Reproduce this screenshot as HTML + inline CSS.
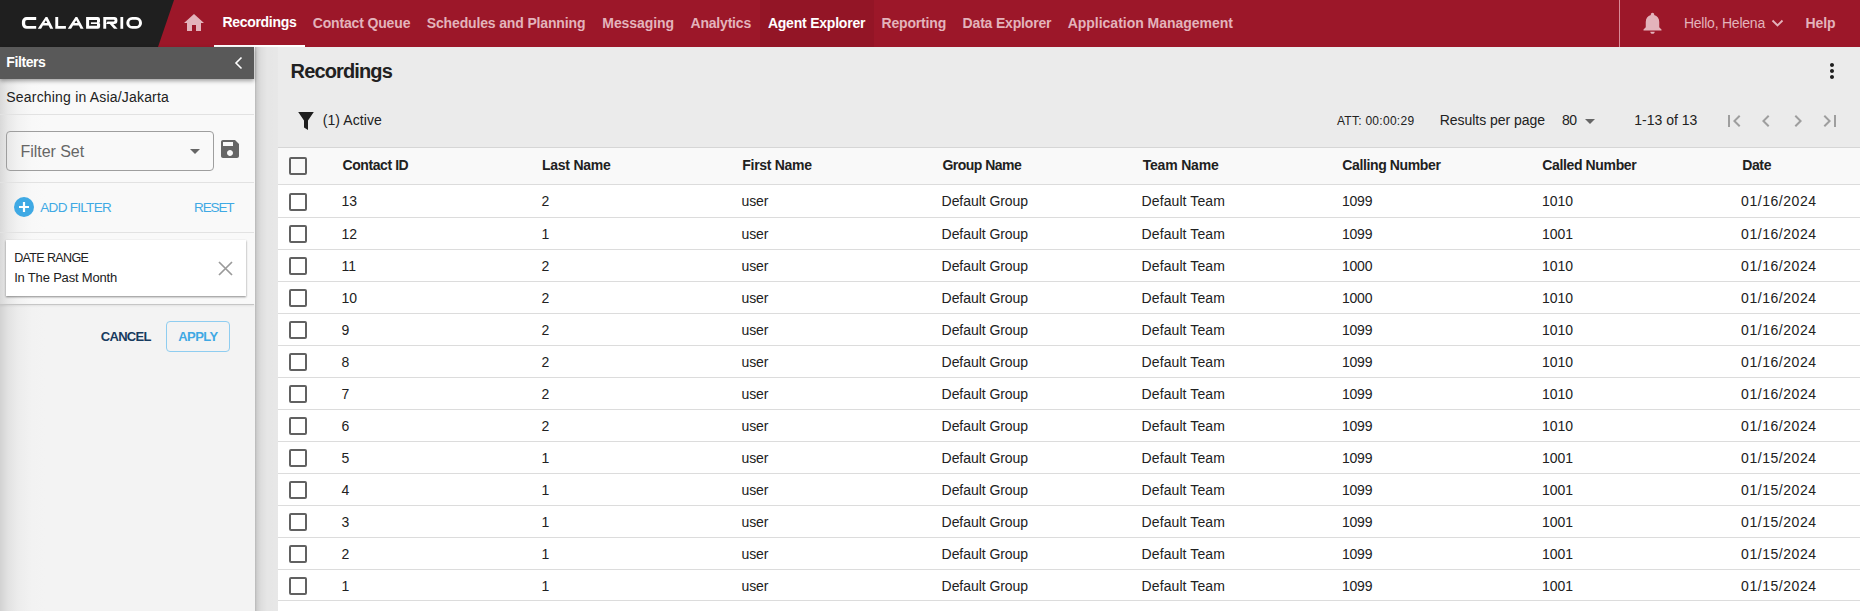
<!DOCTYPE html>
<html><head><meta charset="utf-8"><title>Recordings</title>
<style>
html,body{margin:0;padding:0}
body{width:1860px;height:611px;overflow:hidden;position:relative;background:#ebebeb;font-family:"Liberation Sans", sans-serif;}
.t{position:absolute;white-space:nowrap;line-height:1;}
svg{display:block}
</style></head><body>
<div style="position:absolute;left:0;top:0;width:1860px;height:47px;background:#9c1729"></div>
<svg style="position:absolute;left:0;top:0" width="180" height="47"><polygon points="0,0 174,0 158,47 0,47" fill="#1f1f1f"/></svg>
<svg style="position:absolute;left:0;top:0" width="160" height="47" viewBox="0 0 160 47">
<g fill="#fff">
<path d="M36.2,17 H26.6 A4.7,4.7 0 0 0 21.9,21.7 V24.1 A4.7,4.7 0 0 0 26.6,28.8 H36.2 V25.9 H27 A1.8,1.8 0 0 1 25.2,24.1 V21.7 A1.8,1.8 0 0 1 27,19.9 H36.2 Z"/>
<path d="M45.6,17 H47.4 L53.3,28.8 H50.2 L48.6,25.6 H42.2 L43.6,23 H47.3 L45.9,20.2 L41.1,28.8 H37.8 Z"/>
<path d="M55.3,17 H58.2 V26 H65.9 V28.8 H55.3 Z"/>
<path d="M75.5,17 H77.3 L83.6,28.8 H80.5 L78.9,25.6 H72.2 L73.6,23 H77.6 L76.2,20.2 L71.1,28.8 H67.8 Z"/>
<path fill-rule="evenodd" d="M86.1,17 H97.8 A2.2,2.2 0 0 1 100,19.2 V21.8 L99.4,22.9 L100.1,24 V26.6 A2.2,2.2 0 0 1 97.9,28.8 H86.1 Z M89.1,20.1 V25.7 H97 V20.1 Z"/><rect x="90.9" y="22.3" width="6.3" height="1.7"/>
<path d="M103.3,17 H114.3 A3.2,3.1 0 0 1 117.4,20.1 V20.9 A3.2,3.1 0 0 1 114.3,24 H113.3 L117.6,28.8 H114 L109.8,24 H106.2 L107.4,21.4 H113.9 A0.9,0.9 0 0 0 114.6,20.5 A0.9,0.9 0 0 0 113.9,19.7 H106.2 V28.8 H103.3 Z"/>
<rect x="120.4" y="17" width="2.8" height="11.8"/>
<path d="M132.2,17 H136.1 A5.9,5.9 0 0 1 142,22.9 A5.9,5.9 0 0 1 136.1,28.8 H132.2 A5.9,5.9 0 0 1 126.3,22.9 A5.9,5.9 0 0 1 132.2,17 Z M132.4,19.8 A3.1,3.1 0 0 0 129.3,22.9 A3.1,3.1 0 0 0 132.4,26 H135.9 A3.1,3.1 0 0 0 139,22.9 A3.1,3.1 0 0 0 135.9,19.8 Z"/>
</g></svg>
<svg style="position:absolute;left:182px;top:11px" width="24" height="24" viewBox="0 0 24 24"><path fill="#e3b3bb" d="M10 20v-6h4v6h5v-8h3L12 3 2 12h3v8z"/></svg>
<div style="position:absolute;left:214px;top:45px;width:91px;height:2px;background:#fff"></div>
<div style="position:absolute;left:760px;top:0;width:114px;height:47px;background:rgba(0,0,0,0.055)"></div>
<div class="t" style="left:222.40px;top:15px;font-size:14px;color:#fff;font-weight:700;letter-spacing:-0.301px;">Recordings</div>
<div class="t" style="left:312.70px;top:16px;font-size:14px;color:#e3b3bb;font-weight:700;letter-spacing:-0.151px;">Contact Queue</div>
<div class="t" style="left:426.80px;top:16px;font-size:14px;color:#e3b3bb;font-weight:700;letter-spacing:-0.150px;">Schedules and Planning</div>
<div class="t" style="left:602.30px;top:16px;font-size:14px;color:#e3b3bb;font-weight:700;letter-spacing:-0.072px;">Messaging</div>
<div class="t" style="left:690.50px;top:16px;font-size:14px;color:#e3b3bb;font-weight:700;letter-spacing:-0.194px;">Analytics</div>
<div class="t" style="left:767.90px;top:16px;font-size:14px;color:#fff;font-weight:700;letter-spacing:-0.218px;">Agent Explorer</div>
<div class="t" style="left:881.60px;top:16px;font-size:14px;color:#e3b3bb;font-weight:700;letter-spacing:-0.189px;">Reporting</div>
<div class="t" style="left:962.60px;top:16px;font-size:14px;color:#e3b3bb;font-weight:700;letter-spacing:-0.180px;">Data Explorer</div>
<div class="t" style="left:1067.70px;top:16px;font-size:14px;color:#e3b3bb;font-weight:700;letter-spacing:-0.017px;">Application Management</div>
<div style="position:absolute;left:1619px;top:0;width:1px;height:47px;background:#d98b97"></div>
<svg style="position:absolute;left:1638.5px;top:10.2px" width="27" height="26" viewBox="0 0 24 24" preserveAspectRatio="none"><path fill="#e3b3bb" d="M12 22c1.1 0 2-.9 2-2h-4c0 1.1.89 2 2 2zm6-6v-5c0-3.07-1.64-5.64-4.5-6.32V4c0-.83-.67-1.5-1.5-1.5s-1.5.67-1.5 1.5v.68C7.630 5.36 6 7.92 6 11v5l-2 2v1h16v-1l-2-2z"/></svg>
<div class="t" style="left:1683.90px;top:16px;font-size:14px;color:#e3b3bb;letter-spacing:-0.227px;">Hello, Helena</div>
<svg style="position:absolute;left:1771px;top:19px" width="13" height="9" viewBox="0 0 13 9"><path d="M1.5 1.5 L6.5 6.5 L11.5 1.5" stroke="#e3b3bb" stroke-width="1.9" fill="none"/></svg>
<div class="t" style="left:1805.50px;top:16px;font-size:14px;color:#e3b3bb;font-weight:700;letter-spacing:-0.134px;">Help</div>
<div style="position:absolute;left:0;top:47px;width:255px;height:564px;background:linear-gradient(to right,#d2d2d2 0px,#e2e2e2 8px,#ececec 18px,#f2f2f2 32px,#f3f3f3 45px)"></div>
<div style="position:absolute;left:0;top:79px;width:255px;height:225px;background:linear-gradient(to right,#d9d9d9 0px,#e8e8e8 8px,#f2f2f2 18px,#f8f8f8 32px,#f9f9f9 45px)"></div>
<div style="position:absolute;left:0;top:47px;width:254px;height:32px;background:#595959;box-shadow:0 2px 4px rgba(0,0,0,0.35)"></div>
<div class="t" style="left:6.30px;top:55px;font-size:14px;color:#fff;font-weight:700;letter-spacing:-0.416px;">Filters</div>
<svg style="position:absolute;left:226px;top:51px" width="24" height="24" viewBox="0 0 24 24"><path fill="none" stroke="#fff" stroke-width="1.6" d="M15.5 6.5 L10 12 L15.5 17.5"/></svg>
<div class="t" style="left:6.30px;top:90px;font-size:14px;color:#212121;letter-spacing:0.190px;">Searching in Asia/Jakarta</div>
<div style="position:absolute;left:0;top:114px;width:254px;height:1px;background:#e2e2e2"></div>
<div style="position:absolute;left:0;top:182px;width:254px;height:1px;background:#e2e2e2"></div>
<div style="position:absolute;left:0;top:232px;width:254px;height:1px;background:#e2e2e2"></div>
<div style="position:absolute;left:0;top:304px;width:254px;height:1px;background:#c6c6c6;box-shadow:0 1px 2px rgba(0,0,0,0.1)"></div>
<div style="position:absolute;left:6px;top:131px;width:206px;height:38px;border:1px solid #9e9e9e;border-radius:4px"></div>
<div class="t" style="left:20.60px;top:144px;font-size:16px;color:#666;letter-spacing:-0.052px;">Filter Set</div>
<svg style="position:absolute;left:190px;top:149px" width="10" height="5"><polygon points="0,0 10,0 5,5" fill="#666"/></svg>
<svg style="position:absolute;left:218px;top:137px" width="24" height="24" viewBox="0 0 24 24"><path fill="#666" d="M17 3H5c-1.11 0-2 .9-2 2v14c0 1.1.89 2 2 2h14c1.1 0 2-.9 2-2V7l-4-4zm-5 16c-1.66 0-3-1.34-3-3s1.34-3 3-3 3 1.34 3 3-1.34 3-3 3zm3-10H5V5h10v4z"/></svg>
<svg style="position:absolute;left:14px;top:197px" width="20" height="20" viewBox="0 0 20 20"><circle cx="10" cy="10" r="10" fill="#3fa9e4"/><path d="M10 5v10M5 10h10" stroke="#fff" stroke-width="2.2"/></svg>
<div class="t" style="left:40.30px;top:201px;font-size:13.5px;color:#3fa9e4;letter-spacing:-0.706px;">ADD FILTER</div>
<div class="t" style="left:194.10px;top:201px;font-size:13.5px;color:#3fa9e4;letter-spacing:-1.142px;">RESET</div>
<div style="position:absolute;left:6px;top:240px;width:240px;height:56px;background:#fff;box-shadow:0 1px 2px rgba(0,0,0,0.45)"></div>
<div class="t" style="left:14.20px;top:252px;font-size:12.5px;color:#212121;letter-spacing:-0.633px;">DATE RANGE</div>
<div class="t" style="left:14.20px;top:271px;font-size:13px;color:#212121;letter-spacing:-0.184px;">In The Past Month</div>
<svg style="position:absolute;left:218px;top:261px" width="15" height="15" viewBox="0 0 15 15"><path d="M1 1L14 14M14 1L1 14" stroke="#9a9a9a" stroke-width="1.7"/></svg>
<div class="t" style="left:100.80px;top:330px;font-size:13px;color:#173a5e;font-weight:700;letter-spacing:-0.711px;">CANCEL</div>
<div style="position:absolute;left:166px;top:321px;width:62px;height:29px;border:1px solid #8fcdf0;border-radius:4px"></div>
<div class="t" style="left:178.20px;top:330px;font-size:13px;color:#3fa9e4;font-weight:700;letter-spacing:-0.550px;">APPLY</div>
<div style="position:absolute;left:255px;top:47px;width:23px;height:564px;background:linear-gradient(to right,rgba(0,0,0,0.22),rgba(0,0,0,0.12) 2px,rgba(0,0,0,0.06) 6px,rgba(0,0,0,0.025) 12px,rgba(0,0,0,0.015) 23px)"></div>
<div class="t" style="left:290.60px;top:61px;font-size:20px;color:#212121;font-weight:700;letter-spacing:-0.872px;">Recordings</div>
<svg style="position:absolute;left:1820px;top:59px" width="24" height="24" viewBox="0 0 24 24"><path fill="#1e1e1e" d="M12 8c1.1 0 2-.9 2-2s-.9-2-2-2-2 .9-2 2 .9 2 2 2zm0 2c-1.1 0-2 .9-2 2s.9 2 2 2 2-.9 2-2-.9-2-2-2zm0 6c-1.1 0-2 .9-2 2s.9 2 2 2 2-.9 2-2-.9-2-2-2z"/></svg>
<svg style="position:absolute;left:298px;top:112px" width="16" height="18" viewBox="0 0 16 18"><path fill="#1e1e1e" d="M0.2 0.1 H15.8 L10 8.4 V18 L6 15.5 V8.4 Z"/></svg>
<div class="t" style="left:322.70px;top:113px;font-size:14px;color:#212121;letter-spacing:0.078px;">(1) Active</div>
<div class="t" style="left:1336.90px;top:115px;font-size:12px;color:#212121;letter-spacing:0.283px;">ATT: 00:00:29</div>
<div class="t" style="left:1439.70px;top:113px;font-size:14px;color:#212121;letter-spacing:-0.034px;">Results per page</div>
<div class="t" style="left:1561.90px;top:113px;font-size:14px;color:#212121;letter-spacing:-0.486px;">80</div>
<svg style="position:absolute;left:1585px;top:119px" width="10" height="5"><polygon points="0,0 10,0 5,5" fill="#666"/></svg>
<div class="t" style="left:1634.20px;top:113px;font-size:14px;color:#212121;letter-spacing:0.015px;">1-13 of 13</div>
<svg style="position:absolute;left:1722px;top:109px" width="24" height="24" viewBox="0 0 24 24"><path fill="#9e9e9e" d="M18.41 16.59L13.82 12l4.59-4.59L17 6l-6 6 6 6zM6 6h2v12H6z"/></svg>
<svg style="position:absolute;left:1754px;top:109px" width="24" height="24" viewBox="0 0 24 24"><path fill="#9e9e9e" d="M15.41 7.41L14 6l-6 6 6 6 1.41-1.41L10.83 12z"/></svg>
<svg style="position:absolute;left:1786px;top:109px" width="24" height="24" viewBox="0 0 24 24"><path fill="#9e9e9e" d="M10 6L8.59 7.41 13.17 12l-4.58 4.59L10 18l6-6z"/></svg>
<svg style="position:absolute;left:1818px;top:109px" width="24" height="24" viewBox="0 0 24 24"><path fill="#9e9e9e" d="M5.59 7.41L10.18 12l-4.59 4.59L7 18l6-6-6-6zM16 6h2v12h-2z"/></svg>
<div style="position:absolute;left:278px;top:147px;width:1582px;height:1px;background:#d6d6d6"></div>
<div style="position:absolute;left:278px;top:148px;width:1582px;height:36px;background:#f9f9f9"></div>
<div style="position:absolute;left:278px;top:184px;width:1582px;height:427px;background:#fff"></div>
<div style="position:absolute;left:278px;top:184px;width:1582px;height:1px;background:#dcdcdc"></div>
<div style="position:absolute;left:289px;top:157px;width:14px;height:14px;border:2px solid #616161;border-radius:2px"></div>
<div class="t" style="left:342.50px;top:158px;font-size:14px;color:#212121;font-weight:700;letter-spacing:-0.420px;">Contact ID</div>
<div class="t" style="left:541.90px;top:158px;font-size:14px;color:#212121;font-weight:700;letter-spacing:-0.234px;">Last Name</div>
<div class="t" style="left:742.30px;top:158px;font-size:14px;color:#212121;font-weight:700;letter-spacing:-0.296px;">First Name</div>
<div class="t" style="left:942.50px;top:158px;font-size:14px;color:#212121;font-weight:700;letter-spacing:-0.531px;">Group Name</div>
<div class="t" style="left:1142.70px;top:158px;font-size:14px;color:#212121;font-weight:700;letter-spacing:-0.184px;">Team Name</div>
<div class="t" style="left:1342.30px;top:158px;font-size:14px;color:#212121;font-weight:700;letter-spacing:-0.375px;">Calling Number</div>
<div class="t" style="left:1542.20px;top:158px;font-size:14px;color:#212121;font-weight:700;letter-spacing:-0.354px;">Called Number</div>
<div class="t" style="left:1742.20px;top:158px;font-size:14px;color:#212121;font-weight:700;letter-spacing:-0.361px;">Date</div>
<div style="position:absolute;left:289px;top:193px;width:14px;height:14px;border:2px solid #616161;border-radius:2px"></div>
<div style="position:absolute;left:278px;top:217px;width:1582px;height:1px;background:#dcdcdc"></div>
<div class="t" style="left:341.50px;top:194px;font-size:14px;color:#212121;">13</div>
<div class="t" style="left:541.50px;top:194px;font-size:14px;color:#212121;">2</div>
<div class="t" style="left:741.50px;top:194px;font-size:14px;color:#212121;letter-spacing:-0.084px;">user</div>
<div class="t" style="left:941.60px;top:194px;font-size:14px;color:#212121;letter-spacing:-0.058px;">Default Group</div>
<div class="t" style="left:1141.60px;top:194px;font-size:14px;color:#212121;letter-spacing:0.093px;">Default Team</div>
<div class="t" style="left:1342.00px;top:194px;font-size:14px;color:#212121;letter-spacing:-0.236px;">1099</div>
<div class="t" style="left:1542.00px;top:194px;font-size:14px;color:#212121;">1010</div>
<div class="t" style="left:1741.10px;top:194px;font-size:14px;color:#212121;letter-spacing:0.543px;">01/16/2024</div>
<div style="position:absolute;left:289px;top:225px;width:14px;height:14px;border:2px solid #616161;border-radius:2px"></div>
<div style="position:absolute;left:278px;top:249px;width:1582px;height:1px;background:#dcdcdc"></div>
<div class="t" style="left:341.50px;top:227px;font-size:14px;color:#212121;">12</div>
<div class="t" style="left:541.50px;top:227px;font-size:14px;color:#212121;">1</div>
<div class="t" style="left:741.50px;top:227px;font-size:14px;color:#212121;letter-spacing:-0.084px;">user</div>
<div class="t" style="left:941.60px;top:227px;font-size:14px;color:#212121;letter-spacing:-0.058px;">Default Group</div>
<div class="t" style="left:1141.60px;top:227px;font-size:14px;color:#212121;letter-spacing:0.093px;">Default Team</div>
<div class="t" style="left:1342.00px;top:227px;font-size:14px;color:#212121;letter-spacing:-0.236px;">1099</div>
<div class="t" style="left:1542.00px;top:227px;font-size:14px;color:#212121;">1001</div>
<div class="t" style="left:1741.10px;top:227px;font-size:14px;color:#212121;letter-spacing:0.543px;">01/16/2024</div>
<div style="position:absolute;left:289px;top:257px;width:14px;height:14px;border:2px solid #616161;border-radius:2px"></div>
<div style="position:absolute;left:278px;top:281px;width:1582px;height:1px;background:#dcdcdc"></div>
<div class="t" style="left:341.50px;top:259px;font-size:14px;color:#212121;">11</div>
<div class="t" style="left:541.50px;top:259px;font-size:14px;color:#212121;">2</div>
<div class="t" style="left:741.50px;top:259px;font-size:14px;color:#212121;letter-spacing:-0.084px;">user</div>
<div class="t" style="left:941.60px;top:259px;font-size:14px;color:#212121;letter-spacing:-0.058px;">Default Group</div>
<div class="t" style="left:1141.60px;top:259px;font-size:14px;color:#212121;letter-spacing:0.093px;">Default Team</div>
<div class="t" style="left:1342.00px;top:259px;font-size:14px;color:#212121;letter-spacing:-0.236px;">1000</div>
<div class="t" style="left:1542.00px;top:259px;font-size:14px;color:#212121;">1010</div>
<div class="t" style="left:1741.10px;top:259px;font-size:14px;color:#212121;letter-spacing:0.543px;">01/16/2024</div>
<div style="position:absolute;left:289px;top:289px;width:14px;height:14px;border:2px solid #616161;border-radius:2px"></div>
<div style="position:absolute;left:278px;top:313px;width:1582px;height:1px;background:#dcdcdc"></div>
<div class="t" style="left:341.50px;top:291px;font-size:14px;color:#212121;">10</div>
<div class="t" style="left:541.50px;top:291px;font-size:14px;color:#212121;">2</div>
<div class="t" style="left:741.50px;top:291px;font-size:14px;color:#212121;letter-spacing:-0.084px;">user</div>
<div class="t" style="left:941.60px;top:291px;font-size:14px;color:#212121;letter-spacing:-0.058px;">Default Group</div>
<div class="t" style="left:1141.60px;top:291px;font-size:14px;color:#212121;letter-spacing:0.093px;">Default Team</div>
<div class="t" style="left:1342.00px;top:291px;font-size:14px;color:#212121;letter-spacing:-0.236px;">1000</div>
<div class="t" style="left:1542.00px;top:291px;font-size:14px;color:#212121;">1010</div>
<div class="t" style="left:1741.10px;top:291px;font-size:14px;color:#212121;letter-spacing:0.543px;">01/16/2024</div>
<div style="position:absolute;left:289px;top:321px;width:14px;height:14px;border:2px solid #616161;border-radius:2px"></div>
<div style="position:absolute;left:278px;top:345px;width:1582px;height:1px;background:#dcdcdc"></div>
<div class="t" style="left:341.50px;top:323px;font-size:14px;color:#212121;">9</div>
<div class="t" style="left:541.50px;top:323px;font-size:14px;color:#212121;">2</div>
<div class="t" style="left:741.50px;top:323px;font-size:14px;color:#212121;letter-spacing:-0.084px;">user</div>
<div class="t" style="left:941.60px;top:323px;font-size:14px;color:#212121;letter-spacing:-0.058px;">Default Group</div>
<div class="t" style="left:1141.60px;top:323px;font-size:14px;color:#212121;letter-spacing:0.093px;">Default Team</div>
<div class="t" style="left:1342.00px;top:323px;font-size:14px;color:#212121;letter-spacing:-0.236px;">1099</div>
<div class="t" style="left:1542.00px;top:323px;font-size:14px;color:#212121;">1010</div>
<div class="t" style="left:1741.10px;top:323px;font-size:14px;color:#212121;letter-spacing:0.543px;">01/16/2024</div>
<div style="position:absolute;left:289px;top:353px;width:14px;height:14px;border:2px solid #616161;border-radius:2px"></div>
<div style="position:absolute;left:278px;top:377px;width:1582px;height:1px;background:#dcdcdc"></div>
<div class="t" style="left:341.50px;top:355px;font-size:14px;color:#212121;">8</div>
<div class="t" style="left:541.50px;top:355px;font-size:14px;color:#212121;">2</div>
<div class="t" style="left:741.50px;top:355px;font-size:14px;color:#212121;letter-spacing:-0.084px;">user</div>
<div class="t" style="left:941.60px;top:355px;font-size:14px;color:#212121;letter-spacing:-0.058px;">Default Group</div>
<div class="t" style="left:1141.60px;top:355px;font-size:14px;color:#212121;letter-spacing:0.093px;">Default Team</div>
<div class="t" style="left:1342.00px;top:355px;font-size:14px;color:#212121;letter-spacing:-0.236px;">1099</div>
<div class="t" style="left:1542.00px;top:355px;font-size:14px;color:#212121;">1010</div>
<div class="t" style="left:1741.10px;top:355px;font-size:14px;color:#212121;letter-spacing:0.543px;">01/16/2024</div>
<div style="position:absolute;left:289px;top:385px;width:14px;height:14px;border:2px solid #616161;border-radius:2px"></div>
<div style="position:absolute;left:278px;top:409px;width:1582px;height:1px;background:#dcdcdc"></div>
<div class="t" style="left:341.50px;top:387px;font-size:14px;color:#212121;">7</div>
<div class="t" style="left:541.50px;top:387px;font-size:14px;color:#212121;">2</div>
<div class="t" style="left:741.50px;top:387px;font-size:14px;color:#212121;letter-spacing:-0.084px;">user</div>
<div class="t" style="left:941.60px;top:387px;font-size:14px;color:#212121;letter-spacing:-0.058px;">Default Group</div>
<div class="t" style="left:1141.60px;top:387px;font-size:14px;color:#212121;letter-spacing:0.093px;">Default Team</div>
<div class="t" style="left:1342.00px;top:387px;font-size:14px;color:#212121;letter-spacing:-0.236px;">1099</div>
<div class="t" style="left:1542.00px;top:387px;font-size:14px;color:#212121;">1010</div>
<div class="t" style="left:1741.10px;top:387px;font-size:14px;color:#212121;letter-spacing:0.543px;">01/16/2024</div>
<div style="position:absolute;left:289px;top:417px;width:14px;height:14px;border:2px solid #616161;border-radius:2px"></div>
<div style="position:absolute;left:278px;top:441px;width:1582px;height:1px;background:#dcdcdc"></div>
<div class="t" style="left:341.50px;top:419px;font-size:14px;color:#212121;">6</div>
<div class="t" style="left:541.50px;top:419px;font-size:14px;color:#212121;">2</div>
<div class="t" style="left:741.50px;top:419px;font-size:14px;color:#212121;letter-spacing:-0.084px;">user</div>
<div class="t" style="left:941.60px;top:419px;font-size:14px;color:#212121;letter-spacing:-0.058px;">Default Group</div>
<div class="t" style="left:1141.60px;top:419px;font-size:14px;color:#212121;letter-spacing:0.093px;">Default Team</div>
<div class="t" style="left:1342.00px;top:419px;font-size:14px;color:#212121;letter-spacing:-0.236px;">1099</div>
<div class="t" style="left:1542.00px;top:419px;font-size:14px;color:#212121;">1010</div>
<div class="t" style="left:1741.10px;top:419px;font-size:14px;color:#212121;letter-spacing:0.543px;">01/16/2024</div>
<div style="position:absolute;left:289px;top:449px;width:14px;height:14px;border:2px solid #616161;border-radius:2px"></div>
<div style="position:absolute;left:278px;top:473px;width:1582px;height:1px;background:#dcdcdc"></div>
<div class="t" style="left:341.50px;top:451px;font-size:14px;color:#212121;">5</div>
<div class="t" style="left:541.50px;top:451px;font-size:14px;color:#212121;">1</div>
<div class="t" style="left:741.50px;top:451px;font-size:14px;color:#212121;letter-spacing:-0.084px;">user</div>
<div class="t" style="left:941.60px;top:451px;font-size:14px;color:#212121;letter-spacing:-0.058px;">Default Group</div>
<div class="t" style="left:1141.60px;top:451px;font-size:14px;color:#212121;letter-spacing:0.093px;">Default Team</div>
<div class="t" style="left:1342.00px;top:451px;font-size:14px;color:#212121;letter-spacing:-0.236px;">1099</div>
<div class="t" style="left:1542.00px;top:451px;font-size:14px;color:#212121;">1001</div>
<div class="t" style="left:1741.10px;top:451px;font-size:14px;color:#212121;letter-spacing:0.543px;">01/15/2024</div>
<div style="position:absolute;left:289px;top:481px;width:14px;height:14px;border:2px solid #616161;border-radius:2px"></div>
<div style="position:absolute;left:278px;top:505px;width:1582px;height:1px;background:#dcdcdc"></div>
<div class="t" style="left:341.50px;top:483px;font-size:14px;color:#212121;">4</div>
<div class="t" style="left:541.50px;top:483px;font-size:14px;color:#212121;">1</div>
<div class="t" style="left:741.50px;top:483px;font-size:14px;color:#212121;letter-spacing:-0.084px;">user</div>
<div class="t" style="left:941.60px;top:483px;font-size:14px;color:#212121;letter-spacing:-0.058px;">Default Group</div>
<div class="t" style="left:1141.60px;top:483px;font-size:14px;color:#212121;letter-spacing:0.093px;">Default Team</div>
<div class="t" style="left:1342.00px;top:483px;font-size:14px;color:#212121;letter-spacing:-0.236px;">1099</div>
<div class="t" style="left:1542.00px;top:483px;font-size:14px;color:#212121;">1001</div>
<div class="t" style="left:1741.10px;top:483px;font-size:14px;color:#212121;letter-spacing:0.543px;">01/15/2024</div>
<div style="position:absolute;left:289px;top:513px;width:14px;height:14px;border:2px solid #616161;border-radius:2px"></div>
<div style="position:absolute;left:278px;top:537px;width:1582px;height:1px;background:#dcdcdc"></div>
<div class="t" style="left:341.50px;top:515px;font-size:14px;color:#212121;">3</div>
<div class="t" style="left:541.50px;top:515px;font-size:14px;color:#212121;">1</div>
<div class="t" style="left:741.50px;top:515px;font-size:14px;color:#212121;letter-spacing:-0.084px;">user</div>
<div class="t" style="left:941.60px;top:515px;font-size:14px;color:#212121;letter-spacing:-0.058px;">Default Group</div>
<div class="t" style="left:1141.60px;top:515px;font-size:14px;color:#212121;letter-spacing:0.093px;">Default Team</div>
<div class="t" style="left:1342.00px;top:515px;font-size:14px;color:#212121;letter-spacing:-0.236px;">1099</div>
<div class="t" style="left:1542.00px;top:515px;font-size:14px;color:#212121;">1001</div>
<div class="t" style="left:1741.10px;top:515px;font-size:14px;color:#212121;letter-spacing:0.543px;">01/15/2024</div>
<div style="position:absolute;left:289px;top:545px;width:14px;height:14px;border:2px solid #616161;border-radius:2px"></div>
<div style="position:absolute;left:278px;top:569px;width:1582px;height:1px;background:#dcdcdc"></div>
<div class="t" style="left:341.50px;top:547px;font-size:14px;color:#212121;">2</div>
<div class="t" style="left:541.50px;top:547px;font-size:14px;color:#212121;">1</div>
<div class="t" style="left:741.50px;top:547px;font-size:14px;color:#212121;letter-spacing:-0.084px;">user</div>
<div class="t" style="left:941.60px;top:547px;font-size:14px;color:#212121;letter-spacing:-0.058px;">Default Group</div>
<div class="t" style="left:1141.60px;top:547px;font-size:14px;color:#212121;letter-spacing:0.093px;">Default Team</div>
<div class="t" style="left:1342.00px;top:547px;font-size:14px;color:#212121;letter-spacing:-0.236px;">1099</div>
<div class="t" style="left:1542.00px;top:547px;font-size:14px;color:#212121;">1001</div>
<div class="t" style="left:1741.10px;top:547px;font-size:14px;color:#212121;letter-spacing:0.543px;">01/15/2024</div>
<div style="position:absolute;left:289px;top:577px;width:14px;height:14px;border:2px solid #616161;border-radius:2px"></div>
<div style="position:absolute;left:278px;top:600px;width:1582px;height:1px;background:#dcdcdc"></div>
<div class="t" style="left:341.50px;top:579px;font-size:14px;color:#212121;">1</div>
<div class="t" style="left:541.50px;top:579px;font-size:14px;color:#212121;">1</div>
<div class="t" style="left:741.50px;top:579px;font-size:14px;color:#212121;letter-spacing:-0.084px;">user</div>
<div class="t" style="left:941.60px;top:579px;font-size:14px;color:#212121;letter-spacing:-0.058px;">Default Group</div>
<div class="t" style="left:1141.60px;top:579px;font-size:14px;color:#212121;letter-spacing:0.093px;">Default Team</div>
<div class="t" style="left:1342.00px;top:579px;font-size:14px;color:#212121;letter-spacing:-0.236px;">1099</div>
<div class="t" style="left:1542.00px;top:579px;font-size:14px;color:#212121;">1001</div>
<div class="t" style="left:1741.10px;top:579px;font-size:14px;color:#212121;letter-spacing:0.543px;">01/15/2024</div>
</body></html>
